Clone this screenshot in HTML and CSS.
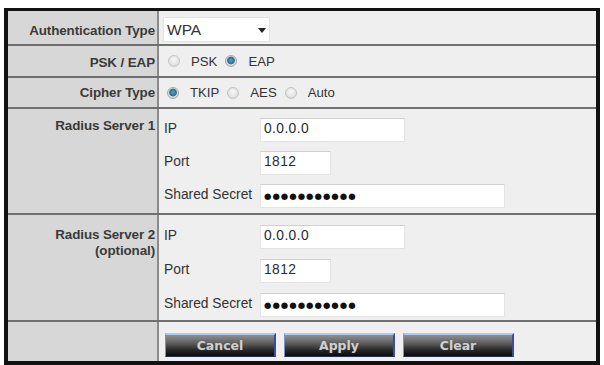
FILE: index.html
```html
<!DOCTYPE html>
<html>
<head>
<meta charset="utf-8">
<link rel="stylesheet" href="styles.css">
</head>
<body>
<div class="panel">
  <div class="row r1">
    <div class="lab">Authentication Type</div>
    <div class="val">
      <div class="select"><span>WPA</span><span class="arrow"></span></div>
    </div>
  </div>
  <div class="row r2">
    <div class="lab">PSK / EAP</div>
    <div class="val radios">
      <span class="radio"></span><span class="opt">PSK</span>
      <span class="radio on"></span><span class="opt">EAP</span>
    </div>
  </div>
  <div class="row r3">
    <div class="lab">Cipher Type</div>
    <div class="val radios">
      <span class="radio on"></span><span class="opt">TKIP</span>
      <span class="radio"></span><span class="opt">AES</span>
      <span class="radio"></span><span class="opt">Auto</span>
    </div>
  </div>
  <div class="row r4">
    <div class="lab">Radius Server 1</div>
    <div class="val fields">
      <div class="field"><span class="flab">IP</span><span class="input w-ip">0.0.0.0</span></div>
      <div class="field"><span class="flab">Port</span><span class="input w-port">1812</span></div>
      <div class="field"><span class="flab">Shared Secret</span><span class="input w-secret dots">●●●●●●●●●●●</span></div>
    </div>
  </div>
  <div class="row r5">
    <div class="lab">Radius Server 2<br>(optional)</div>
    <div class="val fields">
      <div class="field"><span class="flab">IP</span><span class="input w-ip">0.0.0.0</span></div>
      <div class="field"><span class="flab">Port</span><span class="input w-port">1812</span></div>
      <div class="field"><span class="flab">Shared Secret</span><span class="input w-secret dots">●●●●●●●●●●●</span></div>
    </div>
  </div>
  <div class="row r6">
    <div class="lab"></div>
    <div class="val buttons">
      <button class="btn">Cancel</button>
      <button class="btn">Apply</button>
      <button class="btn">Clear</button>
    </div>
  </div>
</div>
</body>
</html>
```

FILE: styles.css
```css
html, body {
  margin: 0;
  padding: 0;
  background: #ffffff;
}
body {
  font-family: "Liberation Sans", Arial, sans-serif;
  color: #333333;
}
.panel {
  margin: 8px 0 0 4px;
  width: 588px;
  border-top: 3px solid #121212;
  border-bottom: 4px solid #121212;
  border-left: 4px solid #121212;
  border-right: 4px solid #121212;
  background: #efefef;
}
.row {
  display: flex;
  border-bottom: 2px solid #707070;
}
.row:last-child {
  border-bottom: none;
}
.lab {
  width: 151px;
  flex: none;
  box-sizing: border-box;
  background: #d7d7d7;
  border-right: 2px solid #8a8a8a;
  text-align: right;
  padding-right: 2px;
  font-weight: bold;
  font-size: 13.4px;
  line-height: 16px;
  color: #3a3a3a;
  letter-spacing: -0.1px;
}
.val {
  flex: 1;
  box-sizing: border-box;
}
.r1 { height: 33px; }
.r2 { height: 30px; }
.r3 { height: 29px; }
.r4 { height: 104px; }
.r5 { height: 105px; }
.r6 { height: 39px; }

.r1 .lab { padding-top: 12px; }
.r2 .lab { padding-top: 9px; }
.r3 .lab { padding-top: 7px; }
.r4 .lab { padding-top: 9px; }
.r5 .lab { padding-top: 12px; line-height: 16px; }

.select {
  margin: 6px 0 0 4px;
  width: 107px;
  height: 25px;
  box-sizing: border-box;
  background: #ffffff;
  border: 1px solid #e2e2e2;
  display: flex;
  align-items: center;
  justify-content: space-between;
  padding: 0 3px 0 3px;
  font-size: 15.5px;
  color: #333;
}
.arrow {
  width: 0;
  height: 0;
  border-left: 4px solid transparent;
  border-right: 4px solid transparent;
  border-top: 5px solid #222;
  margin-top: 1px;
}

.radios {
  display: flex;
  align-items: center;
  font-size: 13.2px;
  padding-left: 9px;
}
.r3 .radios { padding-left: 8px; }
.radio {
  width: 12px;
  height: 12px;
  box-sizing: border-box;
  border-radius: 50%;
  border: 1px solid #c4c4c4;
  background: radial-gradient(circle at 50% 40%, #f8f8f8 0%, #e4e4e4 60%, #cfcfcf 100%);
  margin-right: 11px;
  flex: none;
}
.radio.on {
  background: radial-gradient(circle at 50% 45%, #5aa6cc 0%, #2a78a4 35%, #3d6f8c 46%, #dcdcdc 58%, #c8c8c8 100%);
  border-color: #a8a8a8;
}
.opt {
  margin-right: 8px;
  color: #333;
}

.fields {
  display: flex;
  flex-direction: column;
  gap: 9px;
  padding-top: 9px;
}
.r5 .fields { padding-top: 10px; gap: 10px; }
.field {
  display: flex;
  align-items: center;
  height: 24px;
}
.flab {
  width: 101px;
  flex: none;
  padding-left: 5px;
  box-sizing: border-box;
  font-size: 13.8px;
  color: #333;
  position: relative;
  top: -2px;
}
.input {
  height: 24px;
  box-sizing: border-box;
  background: #ffffff;
  border: 1px solid #e4e4e4;
  border-top-color: #d0d0d0;
  font-size: 13.8px;
  line-height: 20px;
  padding-left: 3px;
  color: #2a2a2a;
  letter-spacing: 0.4px;
}
.w-ip { width: 145px; }
.w-port { width: 71px; }
.w-secret { width: 245px; }
.dots {
  font-family: "DejaVu Sans", sans-serif;
  font-size: 8.5px;
  letter-spacing: 1px;
  line-height: 22px;
  color: #111;
}

.buttons {
  display: flex;
  gap: 8px;
  padding: 11px 0 0 6px;
}
.btn {
  width: 111px;
  height: 24px;
  box-sizing: border-box;
  margin: 0;
  padding: 0;
  border-top: 2px solid #a9c9ee;
  border-left: 1px solid #7f8fc8;
  border-right: 2px solid #3e4c9c;
  border-bottom: 1px solid #27305a;
  background: linear-gradient(#909090 0%, #646464 35%, #2a2a2a 70%, #0a0a0a 100%);
  color: #cfcfcf;
  font-family: "DejaVu Sans", Verdana, sans-serif;
  font-weight: bold;
  font-size: 12.5px;
  text-shadow: 0 0 1px #555;
}
```
